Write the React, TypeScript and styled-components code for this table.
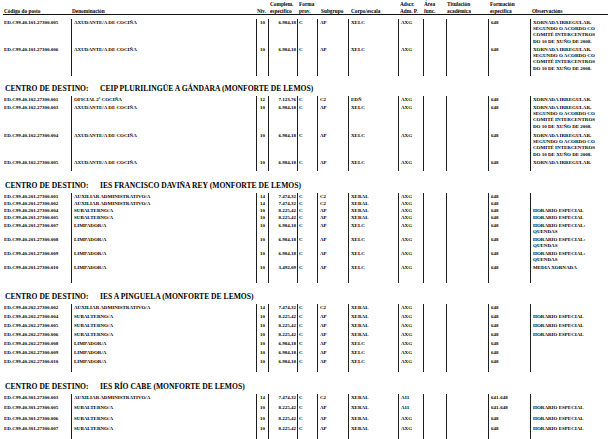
import React from "react"
import styled, { createGlobalStyle } from "styled-components"

const SERIF = `"Liberation Serif", "Times New Roman", "DejaVu Serif", serif`

const GlobalStyle = createGlobalStyle`
    html, body {
        margin: 0;
        padding: 0;
        background: #fff;
    }
    body {
        font-family: ${SERIF};
        color: #000;
        overflow: hidden;
    }
`

type Col = { pad: string; align: "left" | "right" | "center" }

// body columns, widths match the vertical rules of the listing
const BODY_COLS = "71px 185px 12px 29px 20px 31px 50px 25px 23px 42px 42px 80px"
const HEAD_COLS = "68px 185px 12px 29px 20px 31px 50px 25px 23px 42px 42px 78px"

const columns: Col[] = [
    { pad: "0 0 0 4px", align: "left" },
    { pad: "0 0 0 2px", align: "left" },
    { pad: "0", align: "center" },
    { pad: "0 1px 0 0", align: "right" },
    { pad: "0 0 0 1px", align: "left" },
    { pad: "0 0 0 2px", align: "left" },
    { pad: "0 0 0 2px", align: "left" },
    { pad: "0 0 0 2px", align: "left" },
    { pad: "0", align: "left" },
    { pad: "0", align: "left" },
    { pad: "0 0 0 2px", align: "left" },
    { pad: "0 0 0 2px", align: "left" },
]

type Row = {
    code: string
    name: string
    niv: string
    comp: string
    forma: string
    sub: string
    corpo: string
    adscr: string
    form: string
    obs: string[]
    h: number
}

type Section = {
    title?: string
    mt: number
    tail: number
    rows: Row[]
}

const OBS_LONG = ["XORNADA IRREGULAR,", "SEGUNDO O ACORDO CO", "COMITÉ INTERCENTROS", "DO 10 DE XUÑO DE 2008."]
const QUENDAS = ["HORARIO ESPECIAL:", "QUENDAS"]

const axud = (code: string, obs: string[], h: number): Row => ({
    code, name: "AXUDANTE/A DE COCIÑA", niv: "10", comp: "6.984,18", forma: "C",
    sub: "AP", corpo: "XELC", adscr: "AXG", form: "648", obs, h,
})
const aux = (code: string, adscr: string, form: string, h: number): Row => ({
    code, name: "AUXILIAR ADMINISTRATIVO/A", niv: "14", comp: "7.474,32", forma: "C",
    sub: "C2", corpo: "XERAL", adscr, form, obs: [], h,
})
const subal = (code: string, adscr: string, form: string, h: number): Row => ({
    code, name: "SUBALTERNO/A", niv: "10", comp: "8.225,42", forma: "C",
    sub: "AP", corpo: "XERAL", adscr, form, obs: ["HORARIO ESPECIAL"], h,
})
const limp = (code: string, comp: string, obs: string[], h: number): Row => ({
    code, name: "LIMPADOR/A", niv: "10", comp, forma: "C",
    sub: "AP", corpo: "XELC", adscr: "AXG", form: "648", obs, h,
})

const sections: Section[] = [
    {
        mt: 4,
        tail: 3,
        rows: [
            axud("ED.C99.40.101.27300.005", OBS_LONG, 27),
            axud("ED.C99.40.101.27300.006", OBS_LONG, 27),
        ],
    },
    {
        title: "CEIP PLURILINGÜE A GÁNDARA (MONFORTE DE LEMOS)",
        mt: 8,
        tail: 4,
        rows: [
            {
                code: "ED.C99.40.102.27300.001", name: "OFICIAL 2ª COCIÑA", niv: "12", comp: "7.123,76",
                forma: "C", sub: "C2", corpo: "EDÑ", adscr: "AXG", form: "648", obs: ["XORNADA IRREGULAR."], h: 8,
            },
            axud("ED.C99.40.102.27300.003", OBS_LONG, 28),
            axud("ED.C99.40.102.27300.004", OBS_LONG, 27),
            axud("ED.C99.40.102.27300.005", ["XORNADA IRREGULAR."], 8),
        ],
    },
    {
        title: "IES FRANCISCO DAVIÑA REY (MONFORTE DE LEMOS)",
        mt: 10,
        tail: 5,
        rows: [
            aux("ED.C99.40.201.27300.001", "AXG", "648", 7),
            aux("ED.C99.40.201.27300.002", "AXG", "648", 7),
            subal("ED.C99.40.201.27300.004", "AXG", "648", 7),
            subal("ED.C99.40.201.27300.005", "AXG", "648", 8),
            limp("ED.C99.40.201.27300.007", "6.984,18", QUENDAS, 14),
            limp("ED.C99.40.201.27300.008", "6.984,18", QUENDAS, 14),
            limp("ED.C99.40.201.27300.009", "6.984,18", QUENDAS, 14),
            limp("ED.C99.40.201.27300.010", "3.492,09", ["MEDIA XORNADA"], 14),
        ],
    },
    {
        title: "IES A PINGUELA (MONFORTE DE LEMOS)",
        mt: 9,
        tail: 5,
        rows: [
            aux("ED.C99.40.202.27300.002", "AXG", "648", 9),
            subal("ED.C99.40.202.27300.004", "AXG", "648", 9),
            subal("ED.C99.40.202.27300.005", "AXG", "648", 9),
            subal("ED.C99.40.202.27300.006", "AXG", "648", 9),
            limp("ED.C99.40.202.27300.008", "6.984,18", [], 9),
            limp("ED.C99.40.202.27300.009", "6.984,18", [], 9),
            limp("ED.C99.40.202.27300.010", "6.984,18", [], 9),
        ],
    },
    {
        title: "IES RÍO CABE (MONFORTE DE LEMOS)",
        mt: 10,
        tail: 4,
        rows: [
            aux("ED.C99.40.301.27300.003", "A11", "641-648", 10.5),
            subal("ED.C99.40.301.27300.005", "A11", "641-648", 10.5),
            subal("ED.C99.40.301.27300.006", "AXG", "648", 10.5),
            subal("ED.C99.40.301.27300.007", "AXG", "648", 10.5),
        ],
    },
]

const Page = styled.div`
    width: 615px;
    height: 439px;
    overflow: hidden;
    background: #fff;
    font-family: ${SERIF};
    color: #000;
`

const Header = styled.div`
    display: grid;
    grid-template-columns: ${HEAD_COLS};
    margin-left: 3px;
    width: 605px;
    padding-top: 1px;
    border-bottom: 1px solid #111;
    font-size: 5.3px;
    font-weight: bold;
    line-height: 6.5px;
    height: 13px;
`

const HeadCell = styled.div<{ $pad: string }>`
    display: flex;
    flex-direction: column;
    justify-content: flex-end;
    padding: ${(p) => p.$pad};
    white-space: nowrap;
`

const SectionTitle = styled.div<{ $mt: number }>`
    display: flex;
    margin-top: ${(p) => p.$mt}px;
    padding-left: 5px;
    height: 10px;
    line-height: 10px;
    font-family: ${SERIF};
    font-size: 7.6px;
    font-weight: bold;
    white-space: nowrap;
`

const TitleLabel = styled.span`
    width: 95px;
`

const Table = styled.div<{ $mt: number }>`
    margin-top: ${(p) => p.$mt}px;
`

const DataRow = styled.div<{ $h: number }>`
    display: grid;
    grid-template-columns: ${BODY_COLS};
    height: ${(p) => p.$h}px;
`

const Cell = styled.div<{ $rule: boolean; $pad: string; $align: string }>`
    box-sizing: border-box;
    border-left: ${(p) => (p.$rule ? "1px solid #1e1e1e" : "none")};
    padding: ${(p) => p.$pad};
    padding-top: 0.6px;
    text-align: ${(p) => p.$align};
    font-family: ${SERIF};
    font-size: 5px;
    font-weight: bold;
    line-height: 6.4px;
    white-space: nowrap;
    overflow: visible;
`

const headLabels: { pad: string; lines: string[] }[] = [
    { pad: "0 0 0 1px", lines: ["Código do posto"] },
    { pad: "0 0 0 1px", lines: ["Denominación"] },
    { pad: "0 0 0 1px", lines: ["Niv."] },
    { pad: "0 0 0 2px", lines: ["Complem.", "específico"] },
    { pad: "0 0 0 2px", lines: ["Forma", "prov."] },
    { pad: "0 0 0 4px", lines: ["Subgrupo"] },
    { pad: "0 0 0 3px", lines: ["Corpo/escala"] },
    { pad: "0 0 0 2px", lines: ["Adscr.", "Adm. P."] },
    { pad: "0 0 0 1px", lines: ["Área", "func."] },
    { pad: "0 0 0 1px", lines: ["Titulación", "académica"] },
    { pad: "0 0 0 2px", lines: ["Formación", "específica"] },
    { pad: "0 0 0 2px", lines: ["Observacións"] },
]

const rowCells = (r: Row): (string | string[])[] => [
    r.code, r.name, r.niv, r.comp, r.forma, r.sub, r.corpo, r.adscr, "", "", r.form, r.obs,
]

const Line = styled.div``

const Cells = ({ values }: { values: (string | string[])[] }) => (
    <>
        {values.map((v, i) => (
            <Cell key={i} $rule={i > 0} $pad={columns[i].pad} $align={columns[i].align}>
                {Array.isArray(v) ? v.map((l, j) => <Line key={j}>{l}</Line>) : v}
            </Cell>
        ))}
    </>
)

export default function App() {
    return (
        <Page>
            <GlobalStyle />
            <Header>
                {headLabels.map((h, i) => (
                    <HeadCell key={i} $pad={h.pad}>
                        {h.lines.map((l) => (
                            <span key={l}>{l}</span>
                        ))}
                    </HeadCell>
                ))}
            </Header>
            {sections.map((s, i) => (
                <div key={i}>
                    {s.title && (
                        <SectionTitle $mt={s.mt}>
                            <TitleLabel>CENTRO DE DESTINO:</TitleLabel>
                            <span>{s.title}</span>
                        </SectionTitle>
                    )}
                    <Table $mt={s.title ? 2 : s.mt}>
                        {s.rows.map((r) => (
                            <DataRow key={r.code} $h={r.h}>
                                <Cells values={rowCells(r)} />
                            </DataRow>
                        ))}
                        <DataRow $h={s.tail}>
                            <Cells values={Array(12).fill("")} />
                        </DataRow>
                    </Table>
                </div>
            ))}
        </Page>
    )
}
